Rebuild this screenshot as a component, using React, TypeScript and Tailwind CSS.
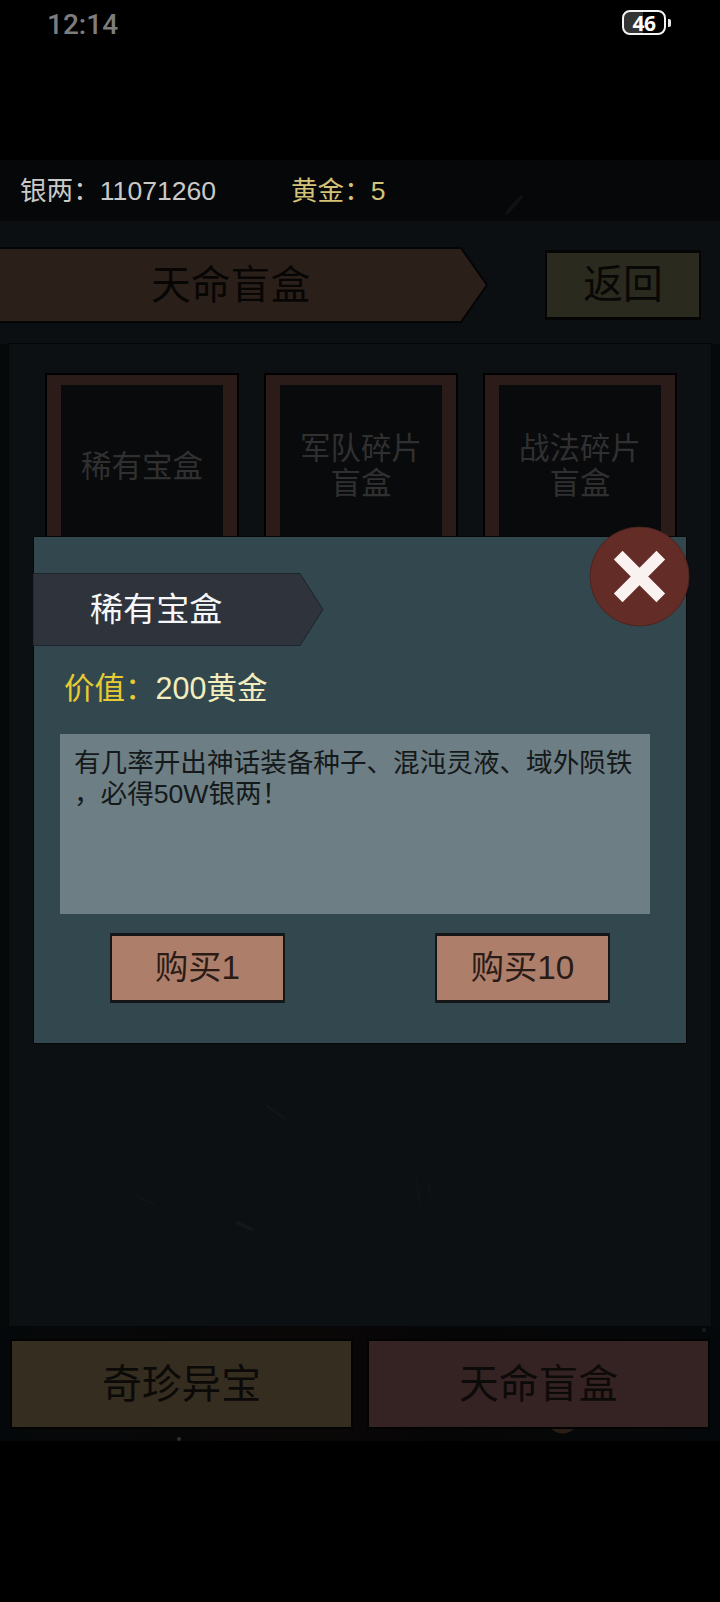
import React from 'react';

const fontStack = "font-['Liberation_Sans','Noto_Sans_CJK_SC',sans-serif]";

const boxes = [
  { id: 1, lines: ['稀有宝盒'] },
  { id: 2, lines: ['军队碎片', '盲盒'] },
  { id: 3, lines: ['战法碎片', '盲盒'] },
];

const StatusBar: React.FC = () => (
  <div className="h-[160px] flex justify-between items-start pl-[47px] pr-[49px] pt-[10px]">
    <span className="font-['Roboto',sans-serif] font-medium text-[28px] leading-[29px] text-[#7d7d7d]">12:14</span>
    <div className="flex items-center">
      <div className="w-[44px] h-[25px] rounded-[8px] border-2 border-[#f4f4f4] bg-[linear-gradient(90deg,#343434_48%,#000_48%)] flex items-center justify-center">
        <span className="font-['Open_Sans',sans-serif] font-bold text-[21px] leading-[20px] tracking-[-0.5px] text-white">46</span>
      </div>
      <div className="w-[3px] h-[8px] ml-[2px] rounded-r-[2px] bg-[#e8e8e8]" />
    </div>
  </div>
);

const Embers: React.FC = () => (
  <svg className="absolute inset-0 pointer-events-none" width="720" height="1281" viewBox="0 0 720 1281" fill="none">
    <path d="M507 53L521 37" stroke="#0d1211" strokeWidth="4" strokeLinecap="round" />
    <path d="M267 946L284 958" stroke="#101517" strokeWidth="3" strokeLinecap="round" />
    <path d="M238 1063L251 1069" stroke="#121719" strokeWidth="4" strokeLinecap="round" />
    <path d="M416 1020L421 1046M428 1022L431 1036" stroke="#0e1416" strokeWidth="2" strokeLinecap="round" />
    <path d="M138 1036L154 1044" stroke="#0e1416" strokeWidth="3" strokeLinecap="round" />
    <path d="M551 1269H574Q563 1278 551 1269Z" fill="#2a1d16" />
    <circle cx="179" cy="1279" r="2" fill="#33302a" />
    <circle cx="704" cy="1170" r="2" fill="#1a1d1c" />
  </svg>
);

const BuyButton: React.FC<{ label: string }> = ({ label }) => (
  <button className="w-[175px] h-[70px] border-x-2 border-y-[3px] border-[#141617] bg-[#ad7f6b] text-[33.3px] leading-none text-[#2a1b17] flex items-center justify-center">
    {label}
  </button>
);

const BuyDialog: React.FC = () => (
  <div className="absolute left-[33px] top-[376px] w-[654px] h-[508px] border border-[#050708] bg-[#32484e]">
    <div className="relative -ml-px mt-[36px] w-[291px] h-[73px]">
      <svg className="absolute inset-0" width="291" height="73" viewBox="0 0 291 73">
        <path d="M0 .5H267L290 36.5L267 72.5H0Z" fill="#2e333c" stroke="#1b252b" />
      </svg>
      <h2 className="relative pl-[57px] h-[73px] flex items-center text-[33.1px] leading-none text-[#f5f7f8]">稀有宝盒</h2>
    </div>

    <div className="ml-[30px] mt-[20px] h-[44px] flex items-center text-[30.5px] leading-none">
      <span className="text-[#e8cb33]">价值：</span>
      <span className="text-[#f3ecbd]">200黄金</span>
    </div>

    <div className="ml-[26px] mt-[24px] w-[590px] h-[180px] bg-[#6d7e84] px-[14px] pt-[14px] text-[26.6px] leading-[31px] text-[#14191b] whitespace-nowrap">
      有几率开出神话装备种子、混沌灵液、域外陨铁
      <br />
      ，必得50W银两！
    </div>

    <div className="mt-[19px] pl-[76px] pr-[76px] flex justify-between">
      <BuyButton label="购买1" />
      <BuyButton label="购买10" />
    </div>

    <button className="absolute left-[555px] top-[-11px]" aria-label="close">
      <svg width="101" height="101" viewBox="0 0 101 101">
        <circle cx="50.5" cy="50.5" r="49.5" fill="#632c26" stroke="#4a2421" />
        <path d="M29.2 29.2L71.8 71.8M71.8 29.2L29.2 71.8" stroke="#f9f2f1" strokeWidth="12.3" />
      </svg>
    </button>
  </div>
);

const App: React.FC = () => {
  return (
    <div className={`w-[720px] h-[1602px] overflow-hidden bg-black ${fontStack}`}>
      <StatusBar />

      <div className="relative h-[1281px] bg-[#06090a] flex flex-col overflow-hidden">
        {/* Currency */}
        <div className="h-[61px] shrink-0 pt-[2px] pl-[20px] flex items-center bg-[#050709] text-[26.6px] leading-none">
          <span className="w-[271px] text-[#c9c9c8]">银两：11071260</span>
          <span className="text-[#d3c277]">黄金：5</span>
        </div>

        {/* Title row */}
        <div className="h-[123px] shrink-0 pt-[26px] pr-[19px] flex justify-between items-start bg-[#0b0f12]">
          <div className="relative w-[488px] h-[76px]">
            <svg className="absolute inset-0" width="488" height="76" viewBox="0 0 488 76">
              <path d="M-2 1H461L487 38L461 75H-2Z" fill="#2a2019" stroke="#050505" strokeWidth="2" />
            </svg>
            <h1 className="relative pl-[151px] pt-[2px] h-[76px] flex items-center text-[39.8px] leading-none text-[#080605]">天命盲盒</h1>
          </div>
          <button className="w-[156px] h-[70px] mt-[3px] border-x-2 border-y-[3px] border-[#050505] bg-[#2b2a1e] text-[39.8px] leading-none text-[#080806] flex items-center justify-center">
            返回
          </button>
        </div>

        {/* Box list */}
        <div className="w-[704px] h-[984px] shrink-0 ml-[8px] -mt-px pt-[29px] pl-[36px] border border-[#040607] bg-[#0c1013] flex gap-[25px] items-start">
          {boxes.map((box) => (
            <div key={box.id} className="w-[194px] h-[300px] border-2 border-black bg-[#2b1c1a] px-[14px] pt-[10px] pb-[12px]">
              <div className="h-[162px] bg-[#090a0c] flex flex-col items-center justify-center text-[30.5px] leading-[35px] text-[#303031]">
                {box.lines.map((line) => (
                  <span key={line}>{line}</span>
                ))}
              </div>
              <div className="h-[112px] bg-[#090a0c]" />
            </div>
          ))}
        </div>

        {/* Tabs */}
        <div className="flex-1 flex justify-between pt-[12px] px-[10px] bg-[linear-gradient(90deg,#05080a,#0a0707_40%,#070606_60%,#05080a)]">
          <button className="w-[343px] h-[90px] pt-[2px] border-2 border-[#030303] bg-[#352d1f] text-[39.8px] leading-none text-[#0c0a08] flex items-center justify-center">
            奇珍异宝
          </button>
          <button className="w-[343px] h-[90px] pt-[2px] border-2 border-[#030303] bg-[#352222] text-[39.8px] leading-none text-[#0d0a0a] flex items-center justify-center">
            天命盲盒
          </button>
        </div>

        <Embers />
        <BuyDialog />
      </div>
    </div>
  );
};

export default App;
